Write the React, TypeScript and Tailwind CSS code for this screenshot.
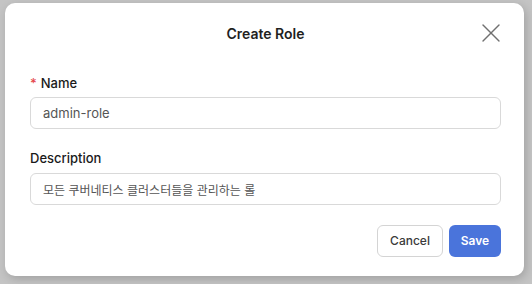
import { X } from "lucide-react";

export default function App() {
  return (
    <div className="w-[532px] h-[284px] bg-[#c4c4c4] pt-[3px] pl-[5px] font-['Inter','Noto_Sans_CJK_KR',sans-serif]">
      <div className="w-[519px] h-[273px] bg-white rounded-[10px] shadow-[2px_3px_10px_rgba(0,0,0,0.18)] pl-[25px] pr-[23px]">
        <div className="relative pt-[21px] h-[41px] flex justify-center">
          <h2 className="text-[14px] leading-5 font-semibold text-[#1f1f1f]">Create Role</h2>
          <button className="absolute right-[-6px] top-[14px] text-[#707070]">
            <X size={32} strokeWidth={1} />
          </button>
        </div>
        <div className="mt-[29px]">
          <label className="flex items-center text-[13px] leading-5 font-medium text-[#1a1a1a]">
            <span className="text-[#e5484d] mr-[4px] text-[13px]">*</span>
            Name
          </label>
          <input
            defaultValue="admin-role"
            className="mt-1 w-full h-8 rounded-[6px] border border-[#d9d9d9] px-3 text-[13px] text-[#555] outline-none"
          />
        </div>
        <div className="mt-[19px]">
          <label className="block text-[13px] leading-5 font-medium text-[#1a1a1a]">Description</label>
          <input
            defaultValue="모든 쿠버네티스 클러스터들을 관리하는 롤"
            className="mt-[5px] w-full h-8 rounded-[6px] border border-[#d9d9d9] px-3 text-[12px] text-[#555] outline-none"
          />
        </div>
        <div className="mt-5 flex justify-end gap-[6px]">
          <button className="h-8 w-[66px] rounded-[6px] border border-[#d4d4d4] bg-white text-[12px] font-medium text-[#3a3a3a]">
            Cancel
          </button>
          <button className="h-8 w-[52px] rounded-[6px] bg-[#4a74db] text-[12px] font-semibold text-white">
            Save
          </button>
        </div>
      </div>
    </div>
  );
}
